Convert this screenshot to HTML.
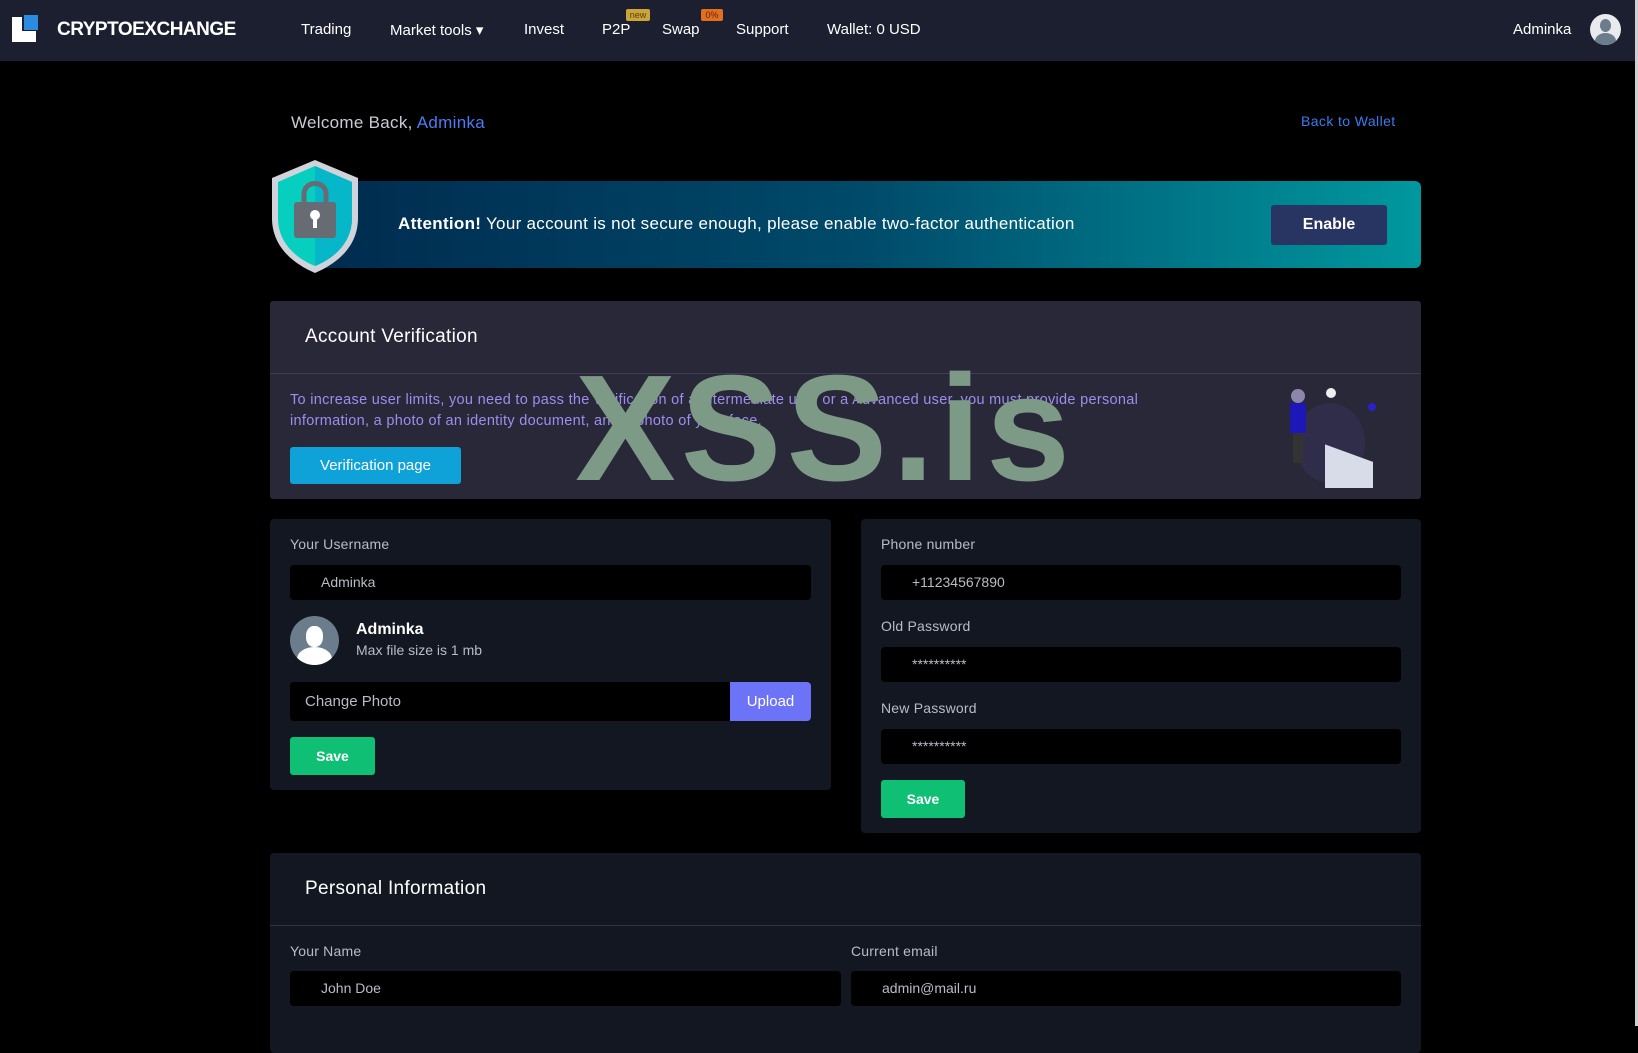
<!DOCTYPE html>
<html><head><meta charset="utf-8"><style>
*{box-sizing:border-box;margin:0;padding:0}
body{width:1638px;height:1026px;overflow:hidden;background:#000;font-family:"Liberation Sans",sans-serif;color:#fff;position:relative}
.a{position:absolute}
.nav{left:0;top:0;width:1638px;height:61px;background:#1c1f2f}
.ni{font-size:15px;color:#fff;top:21px}
.card{background:#131722;border-radius:4px}
.lbl{font-size:14px;color:#b9bcc6;letter-spacing:0.2px}
.inp{background:#000;border-radius:4px;height:35px;font-size:14px;color:#b9bcc6;padding-left:31px;line-height:35px}
.btn{border-radius:3px;font-size:14px;font-weight:bold;text-align:center;color:#fff}
</style></head><body>
<div class="a nav">
 <svg class="a" style="left:12px;top:15px" width="26" height="27" viewBox="0 0 26 27"><rect x="0" y="2" width="10" height="25" fill="#fff"/><rect x="0" y="16" width="24" height="11" fill="#fff"/><rect x="12" y="0" width="14" height="15" fill="#2a8be0"/></svg>
 <div class="a" style="left:57px;top:19px;font-size:19px;font-weight:bold;letter-spacing:-0.5px">CRYPTOEXCHANGE</div>
 <div class="a ni" style="left:301px">Trading</div>
 <div class="a ni" style="left:390px">Market tools ▾</div>
 <div class="a ni" style="left:524px">Invest</div>
 <div class="a ni" style="left:602px">P2P</div>
 <div class="a" style="left:626px;top:9px;width:24px;height:12px;background:#c9a53a;border-radius:2px;font-size:9px;color:#5b3d00;text-align:center;line-height:12px">new</div>
 <div class="a ni" style="left:662px">Swap</div>
 <div class="a" style="left:701px;top:9px;width:22px;height:12px;background:#e0701e;border-radius:2px;font-size:9px;color:#6a2000;text-align:center;line-height:12px">0%</div>
 <div class="a ni" style="left:736px">Support</div>
 <div class="a ni" style="left:827px">Wallet: 0 USD</div>
 <div class="a ni" style="left:1513px">Adminka</div>
 <div class="a" style="left:1590px;top:14px;width:31px;height:31px;border-radius:50%;background:#e8eaee;overflow:hidden"><div class="a" style="left:10px;top:5px;width:11px;height:13px;border-radius:50%;background:#6b7c8d"></div><div class="a" style="left:5px;top:19px;width:21px;height:16px;border-radius:50% 50% 0 0;background:#6b7c8d"></div></div>
</div>
<div class="a" style="right:0;top:0;width:3px;height:1026px;background:#d0d0d0"></div>
<div class="a" style="left:291px;top:113px;font-size:17px;color:#c9ccd4;letter-spacing:0.3px">Welcome Back, <span style="color:#4a7cf5">Adminka</span></div>
<div class="a" style="left:1301px;top:113px;font-size:14px;color:#3a7cf0;letter-spacing:0.4px">Back to Wallet</div>
<div class="a" style="left:300px;top:181px;width:1121px;height:87px;border-radius:6px;background:linear-gradient(90deg,#002a4e,#004a6a 50%,#00989e)"></div>
<svg class="a" style="left:268px;top:158px" width="94" height="117" viewBox="0 0 94 117"><path d="M47 2 L90 20 L90 60 C90 88 70 105 47 115 C24 105 4 88 4 60 L4 20 Z" fill="#d0d4da"/><path d="M47 8 L84 24 L84 60 C84 84 67 100 47 108 C27 100 10 84 10 60 L10 24 Z" fill="#06cfc0"/><path d="M47 8 L84 24 L84 60 C84 84 67 100 47 108 Z" fill="#05b7c8"/><path d="M36 44 V36 C36 22 58 22 58 36 V44" stroke="#666b74" stroke-width="5" fill="none"/><rect x="26" y="44" width="42" height="36" rx="3" fill="#666b74"/><circle cx="47" cy="57" r="5" fill="#fff"/><rect x="45" y="58" width="4" height="12" fill="#fff"/></svg>
<div class="a" style="left:398px;top:214px;font-size:17px;letter-spacing:0.3px"><b>Attention!</b> Your account is not secure enough, please enable two-factor authentication</div>
<div class="a btn" style="left:1271px;top:205px;width:116px;height:40px;background:#283462;line-height:40px;font-size:16px">Enable</div>

<div class="a" style="left:270px;top:301px;width:1151px;height:198px;background:#292838;border-radius:3px"></div>
<div class="a" style="left:270px;top:373px;width:1151px;height:1px;background:#3e3d50"></div>
<div class="a" style="left:305px;top:326px;font-size:19px;letter-spacing:0.3px">Account Verification</div>
<div class="a" style="left:290px;top:390px;width:950px;font-size:14.5px;line-height:21px;color:#9d8df0;letter-spacing:0.3px">To increase user limits, you need to pass the verification of a intermediate user or a Advanced user, you must provide personal<br>information, a photo of an identity document, and a photo of your face.</div>
<div class="a btn" style="left:290px;top:447px;width:171px;height:37px;background:#0ea2d8;line-height:37px;font-weight:normal;font-size:15px">Verification page</div>
<svg class="a" style="left:1280px;top:383px" width="110" height="105" viewBox="0 0 110 105"><ellipse cx="50" cy="60" rx="35" ry="40" fill="#302d4a"/><rect x="45" y="45" width="48" height="45" fill="#d8dbe8" transform="skewY(20)"/><rect x="10" y="20" width="16" height="30" fill="#1e17b8"/><rect x="13" y="50" width="10" height="30" fill="#333"/><circle cx="18" cy="13" r="7" fill="#8d86aa"/><circle cx="51" cy="10" r="5" fill="#eee"/><circle cx="92" cy="24" r="4" fill="#2a21c8"/></svg>
<div class="a" style="left:575px;top:352px;font-size:151px;font-weight:bold;color:#7d9a87;letter-spacing:5px;line-height:1">XSS.is</div>

<div class="a card" style="left:270px;top:519px;width:561px;height:271px"></div>
<div class="a lbl" style="left:290px;top:536px">Your Username</div>
<div class="a inp" style="left:290px;top:565px;width:521px">Adminka</div>
<div class="a" style="left:290px;top:616px;width:49px;height:49px;border-radius:50%;background:#6b7c8d;overflow:hidden"><div class="a" style="left:16px;top:10px;width:17px;height:21px;border-radius:45%;background:#fff"></div><div class="a" style="left:7px;top:31px;width:35px;height:24px;border-radius:50% 50% 0 0;background:#fff"></div></div>
<div class="a" style="left:356px;top:621px;font-size:16px;font-weight:bold">Adminka</div>
<div class="a" style="left:356px;top:642px;font-size:14px;color:#b9bcc6">Max file size is 1 mb</div>
<div class="a inp" style="left:290px;top:682px;width:521px;height:39px;line-height:39px;padding-left:15px;font-size:15px">Change Photo</div>
<div class="a" style="left:730px;top:682px;width:81px;height:39px;background:#6c73f7;border-radius:0 4px 4px 0;font-size:15px;line-height:39px;text-align:center">Upload</div>
<div class="a btn" style="left:290px;top:737px;width:85px;height:38px;background:#0fbf73;line-height:38px">Save</div>

<div class="a card" style="left:861px;top:519px;width:560px;height:314px"></div>
<div class="a lbl" style="left:881px;top:536px">Phone number</div>
<div class="a inp" style="left:881px;top:565px;width:520px">+11234567890</div>
<div class="a lbl" style="left:881px;top:618px">Old Password</div>
<div class="a inp" style="left:881px;top:647px;width:520px">**********</div>
<div class="a lbl" style="left:881px;top:700px">New Password</div>
<div class="a inp" style="left:881px;top:729px;width:520px">**********</div>
<div class="a btn" style="left:881px;top:780px;width:84px;height:38px;background:#0fbf73;line-height:38px">Save</div>

<div class="a card" style="left:270px;top:853px;width:1151px;height:200px"></div>
<div class="a" style="left:270px;top:925px;width:1151px;height:1px;background:#2d3140"></div>
<div class="a" style="left:305px;top:878px;font-size:19px;letter-spacing:0.3px">Personal Information</div>
<div class="a lbl" style="left:290px;top:943px">Your Name</div>
<div class="a lbl" style="left:851px;top:943px">Current email</div>
<div class="a inp" style="left:290px;top:971px;width:551px">John Doe</div>
<div class="a inp" style="left:851px;top:971px;width:550px">admin@mail.ru</div>
</body></html>
